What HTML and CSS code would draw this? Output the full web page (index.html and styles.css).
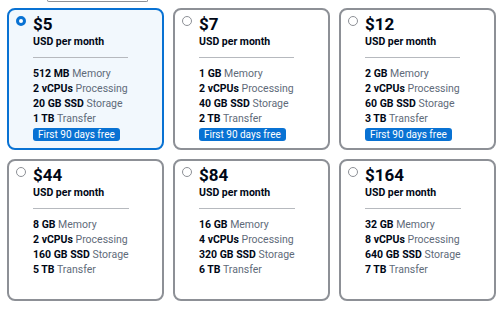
FILE: index.html
```html
<!DOCTYPE html>
<html>
  <head>
    <meta charset="utf-8">
    <title>Choose a plan</title>
    <link rel="stylesheet" href="styles.css">
  </head>
  <body>
    <div class="peek"></div>
    <div class="plans">
      <div class="plan selected">
        <span class="radio"></span>
        <div class="plan-body">
          <div class="price">$5</div>
          <div class="period">USD per month</div>
          <div class="rule"></div>
          <ul class="specs">
            <li><b>512 MB</b> Memory</li>
            <li><b>2 vCPUs</b> Processing</li>
            <li><b>20 GB SSD</b> Storage</li>
            <li><b>1 TB</b> Transfer</li>
          </ul>
          <span class="badge">First 90 days free</span>
        </div>
      </div>
      <div class="plan">
        <span class="radio"></span>
        <div class="plan-body">
          <div class="price">$7</div>
          <div class="period">USD per month</div>
          <div class="rule"></div>
          <ul class="specs">
            <li><b>1 GB</b> Memory</li>
            <li><b>2 vCPUs</b> Processing</li>
            <li><b>40 GB SSD</b> Storage</li>
            <li><b>2 TB</b> Transfer</li>
          </ul>
          <span class="badge">First 90 days free</span>
        </div>
      </div>
      <div class="plan">
        <span class="radio"></span>
        <div class="plan-body">
          <div class="price">$12</div>
          <div class="period">USD per month</div>
          <div class="rule"></div>
          <ul class="specs">
            <li><b>2 GB</b> Memory</li>
            <li><b>2 vCPUs</b> Processing</li>
            <li><b>60 GB SSD</b> Storage</li>
            <li><b>3 TB</b> Transfer</li>
          </ul>
          <span class="badge">First 90 days free</span>
        </div>
      </div>
      <div class="plan">
        <span class="radio"></span>
        <div class="plan-body">
          <div class="price">$44</div>
          <div class="period">USD per month</div>
          <div class="rule"></div>
          <ul class="specs">
            <li><b>8 GB</b> Memory</li>
            <li><b>2 vCPUs</b> Processing</li>
            <li><b>160 GB SSD</b> Storage</li>
            <li><b>5 TB</b> Transfer</li>
          </ul>
        </div>
      </div>
      <div class="plan">
        <span class="radio"></span>
        <div class="plan-body">
          <div class="price">$84</div>
          <div class="period">USD per month</div>
          <div class="rule"></div>
          <ul class="specs">
            <li><b>16 GB</b> Memory</li>
            <li><b>4 vCPUs</b> Processing</li>
            <li><b>320 GB SSD</b> Storage</li>
            <li><b>6 TB</b> Transfer</li>
          </ul>
        </div>
      </div>
      <div class="plan">
        <span class="radio"></span>
        <div class="plan-body">
          <div class="price">$164</div>
          <div class="period">USD per month</div>
          <div class="rule"></div>
          <ul class="specs">
            <li><b>32 GB</b> Memory</li>
            <li><b>8 vCPUs</b> Processing</li>
            <li><b>640 GB SSD</b> Storage</li>
            <li><b>7 TB</b> Transfer</li>
          </ul>
        </div>
      </div>
    </div>
  </body>
</html>
```

FILE: styles.css
```css
body
{
  margin: 0;
  background-color: white;
  font-family: Roboto, "Open Sans", sans-serif;
  color: #000716;
}

/* bottom edge of the control above, cut off by the window */
.peek
{
  width: 99px; height: 1px;
  margin-left: 47px;
  border: 1px solid #8d9096; border-top: none;
  border-radius: 0 0 4px 4px;
}

.plans
{
  display: grid;
  grid-template-columns: repeat(3, 157px);
  grid-auto-rows: 142px;
  gap: 9px;
  margin: 6px 0 0 7px;
}

.plan
{
  display: flex; align-items: flex-start; gap: 7px;
  box-sizing: border-box;
  padding: 4px 7px 0 7px;
  border: 2px solid #8d9096;
  border-radius: 8px;
  background: white;
}
.plan.selected { border-color: #0972d3; background: #f2f8fd; }

.radio
{
  flex: none;
  box-sizing: border-box;
  width: 10px; height: 10px;
  margin-top: 2px;
  border: 1px solid #8d9096;
  border-radius: 50%;
  background: white;
}
.selected .radio { border: 3px solid #0972d3; }

.plan-body { display: flex; flex-direction: column; align-items: flex-start; }

.price { font-size: 17px; line-height: 20px; font-weight: bold; }
.period { margin-top: 1px; font-size: 10.5px; line-height: 14px; font-weight: bold; }
.rule { align-self: stretch; margin-top: 8px; border-top: 1px solid #b6b9be; }

.specs
{
  list-style: none;
  margin: 8px 0 0 0; padding: 0;
  font-size: 10.5px; line-height: 15px;
  color: #5f6b7a;
  white-space: nowrap;
}
.specs b { color: #000716; }

.badge
{
  margin-top: 2px;
  padding: 0 5px;
  border-radius: 3px;
  background: #0972d3;
  color: white;
  font-size: 10px; line-height: 13px;
}
```
